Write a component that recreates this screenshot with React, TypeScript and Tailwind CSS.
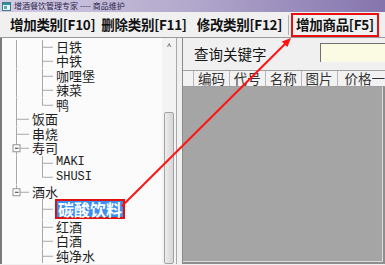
import React from 'react';

type Line = 'full' | 'half' | 'none';
type Node = { label: string; level: 1 | 2; v1: Line; v2: Line; box?: boolean; mono?: boolean; sel?: boolean };

const nodes: Node[] = [
  { label: '日铁', level: 2, v1: 'full', v2: 'full' },
  { label: '中铁', level: 2, v1: 'full', v2: 'full' },
  { label: '咖哩堡', level: 2, v1: 'full', v2: 'full' },
  { label: '辣菜', level: 2, v1: 'full', v2: 'full' },
  { label: '鸭', level: 2, v1: 'full', v2: 'half' },
  { label: '饭面', level: 1, v1: 'full', v2: 'none' },
  { label: '串烧', level: 1, v1: 'full', v2: 'none' },
  { label: '寿司', level: 1, v1: 'full', v2: 'none', box: true },
  { label: 'MAKI', level: 2, v1: 'full', v2: 'full', mono: true },
  { label: 'SHUSI', level: 2, v1: 'full', v2: 'half', mono: true },
  { label: '酒水', level: 1, v1: 'half', v2: 'none', box: true },
  { label: '碳酸饮料', level: 2, v1: 'none', v2: 'full', sel: true },
  { label: '红酒', level: 2, v1: 'none', v2: 'full' },
  { label: '白酒', level: 2, v1: 'none', v2: 'full' },
  { label: '纯净水', level: 2, v1: 'none', v2: 'full' },
];

const V1 = 14.5;
const V2 = 40.5;

function Connector({ n, h }: { n: Node; h: number }) {
  const w = n.level === 1 ? 28 : 52;
  const mid = h / 2;
  const vline = (x: number, kind: Line) =>
    kind === 'none' ? null : <line x1={x} y1={0} x2={x} y2={kind === 'full' ? h : mid} stroke="#a8a8a8" strokeWidth={1} />;
  return (
    <svg width={w} height={h} className="shrink-0">
      {vline(V1, n.v1)}
      {vline(V2, n.v2)}
      {n.level === 1 ? (
        <line x1={n.box ? V1 + 3.5 : V1} y1={mid} x2={27} y2={mid} stroke="#a8a8a8" />
      ) : (
        <line x1={V2} y1={mid} x2={51} y2={mid} stroke="#a8a8a8" />
      )}
      {n.box && (
        <g>
          <rect x={V1 - 3.5} y={mid - 3.5} width={7} height={7} fill="#fff" stroke="#919191" />
          <line x1={V1 - 1.5} y1={mid} x2={V1 + 2} y2={mid} stroke="#333" />
        </g>
      )}
    </svg>
  );
}

function TreeRow({ n }: { n: Node }) {
  const h = n.sel ? 20.5 : 14.5;
  return (
    <div className="flex items-center" style={{ height: h }}>
      <Connector n={n} h={h} />
      {n.sel ? (
        <span className="ml-px border-2 border-[#e01010] bg-[#3b8ff0] px-px text-[16px] leading-[16px] font-bold text-white">{n.label}</span>
      ) : n.mono ? (
        <span className="ml-[2px] font-['Liberation_Mono',monospace] text-[12px] leading-[13px] text-[#222]">{n.label}</span>
      ) : (
        <span className="ml-[2px] text-[13px] leading-[14px] text-[#1e1e1e]">{n.label}</span>
      )}
    </div>
  );
}

export default function App() {
  const tools = ['增加类别[F10]', '删除类别[F11]', '修改类别[F12]'];
  const cols = ['编码', '代号', '名称', '图片'];
  return (
    <div className="relative w-[385px] h-[265px] overflow-hidden bg-[#f0f0f0] font-['Noto_Sans_CJK_SC','Liberation_Sans',sans-serif]">
      {/* title bar */}
      <div className="flex h-[12px] items-center bg-gradient-to-r from-[#d3cde3] via-[#b2a8cc] to-[#8574ad] pl-[2px]">
        <svg width="9" height="9" viewBox="0 0 9 9" className="shrink-0">
          <rect x="0.5" y="0.5" width="8" height="8" fill="#e8f4f4" stroke="#3a7a8a" />
          <rect x="1" y="1" width="7" height="2" fill="#2f8fa0" />
          <rect x="2" y="4" width="3" height="3" fill="#5aa8b8" />
        </svg>
        <span className="ml-[3px] text-[8px] leading-none text-[#2a1f4a]">增酒餐饮管理专家 ---- 商品维护</span>
      </div>

      {/* toolbar */}
      <div className="flex h-[26px] items-center whitespace-nowrap border-b border-[#9a9a9a] pl-[10px] text-[13.5px] font-bold leading-none tracking-[-0.3px] text-[#111]">
        <span>{tools[0]}</span>
        <span className="ml-[6px]">{tools[1]}</span>
        <span className="ml-[10px]">{tools[2]}</span>
        <span className="ml-[6px] h-[20px] w-px bg-[#b0b0b0]" />
        <span className="ml-[2px] flex h-[24px] w-[88px] items-center border-2 border-[#e81010] pl-[3px]">增加商品[F5]</span>
      </div>

      {/* main */}
      <div className="flex h-[226px]">
        <div className="flex w-[177px] border-l-2 border-[#7a7a7a] border-r border-r-[#a8a8a8]">
          <div className="w-[160px] bg-[#fbfbfb] pt-[1.5px]">
            {nodes.map((n, i) => (
              <TreeRow key={i} n={n} />
            ))}
          </div>
          <div className="flex w-[14px] flex-col bg-[#f3f3f3]">
            <div className="flex h-[14px] items-center justify-center text-[8px] text-[#444]">˄</div>
            <div className="ml-[2px] mt-[60px] w-[10px] flex-1 rounded-[2px] border border-[#a4a4a4] bg-gradient-to-r from-[#ececec] to-[#d6d6d6]" />
          </div>
        </div>
        <div className="w-[5px] bg-[#f0f0f0]" />
        <div className="flex min-w-0 flex-1 flex-col border-l border-[#8a8a8a]">
          <div className="flex h-[32px] items-center pl-[11px]">
            <span className="text-[14.5px] leading-none text-[#151515]">查询关键字</span>
            <div className="ml-auto mt-[-4px] h-[19px] w-[65px] border-l border-t border-[#707070] bg-[#fbfbe3]" />
          </div>
          <div className="flex h-[17px] whitespace-nowrap border-t border-b border-[#a0a0a0] bg-[#f2f2f2] text-[13.5px] leading-none text-[#333]">
            <div className="w-[11px] border-r border-[#b8b8b8]" />
            {cols.map((c) => (
              <div key={c} className="flex w-[36px] items-center justify-center border-r border-[#b8b8b8]">
                {c}
              </div>
            ))}
            <div className="flex flex-1 items-center pl-[7px]">价格一</div>
          </div>
          <div className="flex-1 border-r-2 border-b-2 border-[#8e8e8e]">
            <div className="h-full border-r border-b border-[#dadada] bg-[#a5a5a5]" />
          </div>
        </div>
      </div>

      {/* annotation arrow */}
      <svg className="pointer-events-none absolute inset-0" width="385" height="265">
        <line x1="122" y1="206" x2="287" y2="42" stroke="#ff1414" strokeWidth="2" />
        <polygon points="291,38 287.4,47.1 281.8,41.5" fill="#ff1414" />
      </svg>
    </div>
  );
}
